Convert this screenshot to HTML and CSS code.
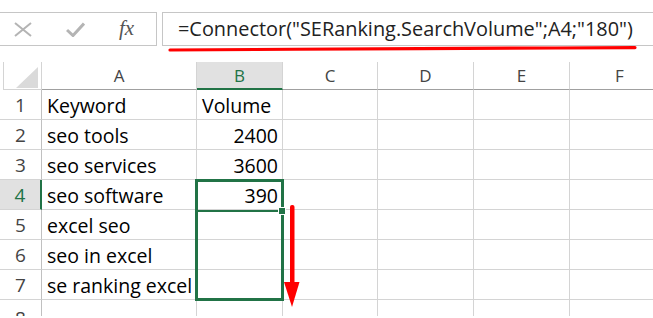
FILE: index.html
```html
<!DOCTYPE html>
<html>
<head>
    <meta charset="UTF-8">
    <title>Connector formula</title>
    <link rel="stylesheet" href="styles.css">
</head>
<body>
    <div class="formula-bar">
        <div class="name-tools">
            <svg class="tool" width="18" height="15" viewBox="0 0 18 15"><path d="M1 1 L17 14 M17 1 L1 14" stroke="#b4b4b4" stroke-width="2" fill="none"/></svg>
            <svg class="tool" width="19" height="15" viewBox="0 0 19 15"><path d="M1 8 L7 13.5 L18 1.5" stroke="#b4b4b4" stroke-width="3" fill="none"/></svg>
            <span class="fx">fx</span>
        </div>
        <div class="formula">=Connector("SERanking.SearchVolume";A4;"180")</div>
    </div>
    <svg class="underline" width="653" height="8" viewBox="0 0 653 8"><path d="M170 5 C260 4.5 330 4 420 3.6 S560 3 635 2.6" stroke="#ff0000" stroke-width="3.2" stroke-linecap="round" fill="none"/></svg>

    <div class="sheet">
        <div class="hd corner"><svg width="24" height="22" viewBox="0 0 24 22"><polygon points="0,21 22,21 22,0" fill="#dadada"/></svg></div>
        <div class="hd">A</div>
        <div class="hd sel-col">B</div>
        <div class="hd">C</div>
        <div class="hd">D</div>
        <div class="hd">E</div>
        <div class="hd">F</div>

        <div class="rh">1</div><div class="c">Keyword</div><div class="c">Volume</div><div class="c"></div><div class="c"></div><div class="c"></div><div class="c"></div>
        <div class="rh">2</div><div class="c">seo tools</div><div class="c num">2400</div><div class="c"></div><div class="c"></div><div class="c"></div><div class="c"></div>
        <div class="rh">3</div><div class="c">seo services</div><div class="c num">3600</div><div class="c"></div><div class="c"></div><div class="c"></div><div class="c"></div>
        <div class="rh sel-row">4</div><div class="c">seo software</div><div class="c num">390</div><div class="c"></div><div class="c"></div><div class="c"></div><div class="c"></div>
        <div class="rh">5</div><div class="c">excel seo</div><div class="c"></div><div class="c"></div><div class="c"></div><div class="c"></div><div class="c"></div>
        <div class="rh">6</div><div class="c">seo in excel</div><div class="c"></div><div class="c"></div><div class="c"></div><div class="c"></div><div class="c"></div>
        <div class="rh">7</div><div class="c">se ranking excel</div><div class="c"></div><div class="c"></div><div class="c"></div><div class="c"></div><div class="c"></div>
        <div class="rh last">8</div><div class="c"></div><div class="c"></div><div class="c"></div><div class="c"></div><div class="c"></div><div class="c"></div>

        <div class="selection">
            <div class="active"></div>
            <div class="handle"></div>
        </div>
        <svg class="arrow" width="17" height="104" viewBox="0 0 17 104"><rect x="6" y="0" width="4.5" height="82" rx="2" fill="#ff0000"/><polygon points="0,77 15.5,77 8,102" fill="#ff0000"/></svg>
    </div>
</body>
</html>
```
FILE: styles.css
```css
html, body {
    margin: 0;
    padding: 0;
    background: #ffffff;
}
body {
    width: 653px;
    height: 318px;
    overflow: hidden;
    position: relative;
    font-family: "Open Sans", "Noto Sans", sans-serif;
}
.formula-bar {
    display: flex;
    gap: 5px;
    margin-top: 12px;
    height: 34px;
}
.name-tools {
    box-sizing: border-box;
    width: 158px;
    margin-left: -1px;
    border: 1px solid #c6c6c6;
    display: flex;
    align-items: center;
    padding-left: 14px;
}
.name-tools .tool:nth-child(2) {
    margin-left: 34px;
}
.fx {
    margin-left: 34px;
    font-family: "Liberation Serif", serif;
    font-style: italic;
    font-size: 21px;
    color: #555555;
    margin-top: -2px;
}
.formula {
    flex: 1;
    box-sizing: border-box;
    border: 1px solid #c6c6c6;
    border-right: none;
    padding-left: 15px;
    font-size: 19.9px;
    line-height: 31px;
    color: #222222;
    white-space: nowrap;
}
.underline {
    position: absolute;
    left: 0;
    top: 45px;
}
.sheet {
    position: relative;
    margin-top: 16px;
    display: grid;
    grid-template-columns: 42px 155px 86px 95px 96px 96px 100px;
    grid-template-rows: 28px repeat(7, 30px) 16px;
}
.hd {
    box-sizing: border-box;
    border-right: 1px solid #d4d4d4;
    border-bottom: 1px solid #a0a0a0;
    text-align: center;
    font-size: 17px;
    line-height: 27px;
    color: #444444;
}
.corner {
    margin-left: 3px;
    border-left: 1px solid #d4d4d4;
    border-bottom-color: #d4d4d4;
    display: flex;
    justify-content: flex-end;
    align-items: flex-end;
}
.corner svg {
    margin-right: 1px;
}
.sel-col {
    background: #e1e1e1;
    border-bottom: 2px solid #217346;
    color: #217346;
}
.rh {
    box-sizing: border-box;
    border-right: 1px solid #c0c0c0;
    border-bottom: 1px solid #d4d4d4;
    text-align: center;
    font-size: 19px;
    line-height: 31px;
    color: #444444;
}
.rh.last, .c:nth-last-child(-n+9) {
    border-bottom: none;
    overflow: hidden;
}
.rh.last {
    line-height: 36px;
}
.sel-row {
    background: #e1e1e1;
    border-right: 2px solid #217346;
    color: #217346;
}
.c {
    box-sizing: border-box;
    border-right: 1px solid #d4d4d4;
    border-bottom: 1px solid #d4d4d4;
    padding: 0 4px 0 5px;
    font-size: 19.5px;
    line-height: 31px;
    color: #000000;
    white-space: nowrap;
}
.num {
    text-align: right;
}
/* selected range B4:B7 */
.selection {
    position: absolute;
    left: 195px;
    top: 117px;
    width: 89px;
    height: 122px;
    box-sizing: border-box;
    border: 3px solid #217346;
}
.active {
    height: 28px;
    border-bottom: 2px solid #217346;
}
.handle {
    position: absolute;
    right: -5px;
    top: 25px;
    width: 6px;
    height: 6px;
    background: #217346;
    border: 1px solid #ffffff;
}
.arrow {
    position: absolute;
    left: 284px;
    top: 143px;
}
```
